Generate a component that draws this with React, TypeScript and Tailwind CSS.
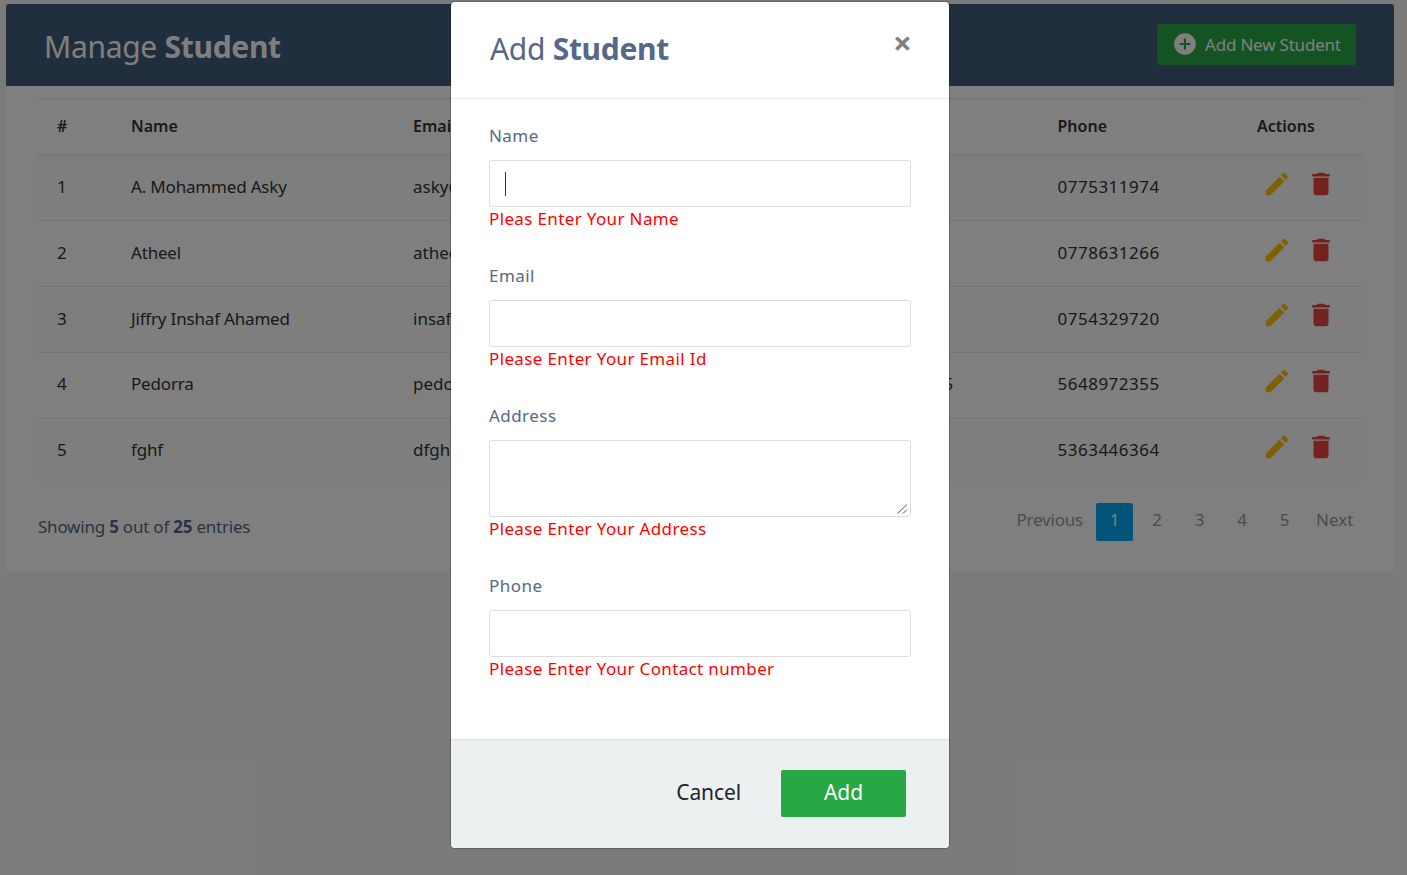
import { MdAddCircle, MdDelete, MdEdit } from 'react-icons/md';

const students = [
  { id: 1, name: 'A. Mohammed Asky', email: 'asky@mail.com', address: '', phone: '0775311974' },
  { id: 2, name: 'Atheel', email: 'atheel@mail.com', address: '', phone: '0778631266' },
  { id: 3, name: 'Jiffry Inshaf Ahamed', email: 'insaf@mail.com', address: '', phone: '0754329720' },
  { id: 4, name: 'Pedorra', email: 'pedorra@mail.com', address: '45 Main Street, Colombo 05', phone: '5648972355' },
  { id: 5, name: 'fghf', email: 'dfghgf@mail.com', address: '', phone: '5363446364' },
];

function Field({ label, error, area }: { label: string; error: string; area?: boolean }) {
  const box = 'block w-full border border-[#dddddd] rounded-[3px] bg-white outline-none';
  return (
    <div className="mb-[33px]">
      <label className="block text-[17px] leading-[24px] mb-[12px] text-[#566787] tracking-[0.45px]">{label}</label>
      {area ? (
        <div className="relative">
          <textarea className={`${box} h-[77px] resize-none`} />
          <svg className="absolute right-[3px] bottom-[3px] pointer-events-none" width="11" height="10" viewBox="0 0 11 10" stroke="#555555" fill="none">
            <path d="M0.5 9.5 L10 0.5 M6 9.5 L10 5.5" />
          </svg>
        </div>
      ) : (
        <input className={`${box} h-[47px]`} />
      )}
      <p className="text-[17px] leading-[24px] text-[#ff0000] tracking-[0.36px]">{error}</p>
    </div>
  );
}

export default function App() {
  return (
    <div className="relative min-h-[875px] bg-[#f5f5f5] pt-1 px-[6px] pr-[13px] font-['Noto_Sans',sans-serif] overflow-hidden">
      <div className="bg-white rounded-[3px] h-[568px]">
        <div className="flex items-center justify-between h-[82px] bg-[#435d7d] rounded-t-[3px] pl-[38px] pr-[38px]">
          <h2 className="text-[30px] text-white tracking-[-0.3px] mt-[2px]">
            Manage <b>Student</b>
          </h2>
          <button className="flex items-center h-[41px] w-[199px] -mt-[2px] pl-[15px] bg-[#28a745] rounded-[2px] text-white text-[17px] tracking-[-0.2px] gap-[7px]">
            <MdAddCircle size={26} />
            <span className="mt-[2px]">Add New Student</span>
          </button>
        </div>

        <div className="px-[32px] pt-[12px]">
          <table className="w-full table-fixed border-collapse text-[17px] text-[#333333]">
            <colgroup>
              <col className="w-[74px]" />
              <col className="w-[282px]" />
              <col className="w-[319.5px]" />
              <col className="w-[325px]" />
              <col className="w-[199.5px]" />
              <col />
            </colgroup>
            <thead>
              <tr className="h-[56px] border-t-2 border-b-2 border-[#eeeeee] text-left text-[16px]">
                {['#', 'Name', 'Email', 'Address', 'Phone', 'Actions'].map((h) => (
                  <th key={h} className="pl-[19px] pb-[2px] font-semibold">{h}</th>
                ))}
              </tr>
            </thead>
            <tbody>
              {students.map((s, i) => (
                <tr key={s.id} className={`h-[65.75px] border-b border-[#e5e5e5] last:border-b-0 ${i % 2 === 0 ? 'bg-[#fcfcfc]' : ''}`}>
                  <td className="pl-[19px] pb-[2px]">{s.id}</td>
                  <td className="pl-[19px] pb-[2px] tracking-[-0.18px]">{s.name}</td>
                  <td className="pl-[19px] pb-[2px]">{s.email}</td>
                  <td className="pl-[19px] pb-[2px] whitespace-nowrap">{s.address}</td>
                  <td className="pl-[19px] pb-[2px] tracking-[0.5px]">{s.phone}</td>
                  <td className="pl-[24px] pb-[2px]">
                    <div className="flex items-center gap-[14px] -mt-[6px]">
                      <MdEdit size={30} className="text-[#ffc107]" />
                      <MdDelete size={30} className="text-[#e8453c]" />
                    </div>
                  </td>
                </tr>
              ))}
            </tbody>
          </table>

          <div className="flex items-start justify-between pt-[19px] pr-[10px]">
            <div className="mt-[12px] text-[17px] leading-[24px] tracking-[-0.22px] text-[#566787]">
              Showing <b>5</b> out of <b>25</b> entries
            </div>
            <div className="flex items-center h-[38px] pb-[0px] text-[17px] text-[#999999]">
              <span className="mr-[13px] -mt-[4px] tracking-[-0.2px]">Previous</span>
              <span className="flex items-center justify-center w-[37px] h-[38px] pb-[4px] rounded-[2px] bg-[#03a9f4] text-white">1</span>
              <span className="w-[48px] -mt-[4px] text-center">2</span>
              <span className="w-[37px] -mt-[4px] text-center">3</span>
              <span className="w-[48px] -mt-[4px] text-center">4</span>
              <span className="w-[37px] -mt-[4px] text-center">5</span>
              <span className="ml-[13px] w-[36px] -mt-[4px]">Next</span>
            </div>
          </div>
        </div>
      </div>

      <div className="absolute inset-0 bg-black/50" />

      <div className="absolute left-[450px] top-[1px] w-[500px] h-[848px] flex flex-col bg-white bg-clip-padding border border-black/20 rounded-[5px] overflow-hidden">
        <div className="relative h-[97px] shrink-0 border-b border-[#e9ecef] pl-[39px] pt-[27px]">
          <h4 className="text-[30px] leading-[40px] text-[#566787] tracking-[-0.3px]">
            Add <b>Student</b>
          </h4>
          <span className="absolute right-[37px] top-[21px] text-[33px] leading-[40px] font-bold text-[#7f7f7f]">×</span>
        </div>

        <div className="relative flex-1 px-[38px] pt-[25px]">
          <span className="absolute left-[54px] top-[73px] w-px h-[24px] bg-[#333333]" />
          <Field label="Name" error="Pleas Enter Your Name" />
          <Field label="Email" error="Please Enter Your Email Id" />
          <Field label="Address" error="Please Enter Your Address" area />
          <Field label="Phone" error="Please Enter Your Contact number" />
        </div>

        <div className="flex items-center justify-end h-[109px] shrink-0 bg-[#ecf0f1] border-t border-[#dee2e6] pr-[43px] pb-[2px]">
          <button className="mr-[40px] text-[21px] text-[#212529] tracking-[-0.1px]">Cancel</button>
          <button className="w-[125px] h-[47px] rounded-[2px] bg-[#28a745] text-white text-[21px]">Add</button>
        </div>
      </div>
    </div>
  );
}
